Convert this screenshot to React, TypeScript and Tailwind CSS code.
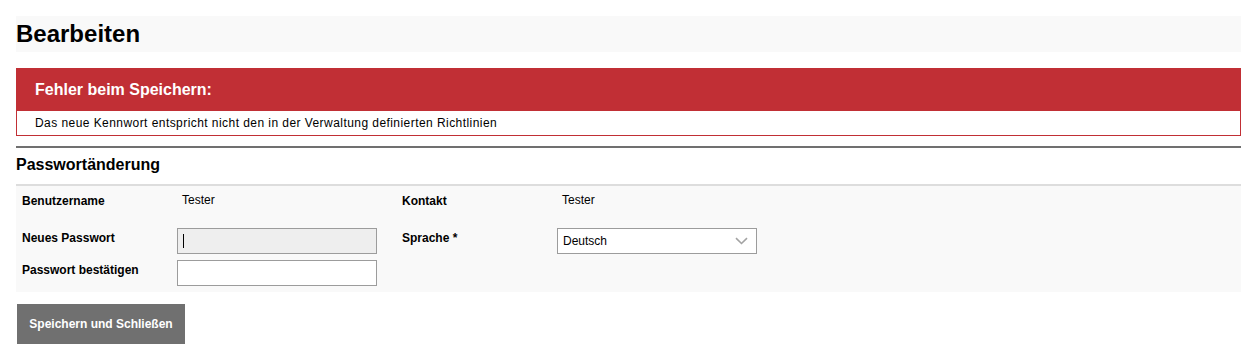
import React from "react";

export default function App() {
  const font = { fontFamily: '"Liberation Sans", Arial, sans-serif' };
  return (
    <div className="min-h-[355px] w-full bg-white px-[16px] pt-[16px] text-black" style={font}>
      <div className="mr-[-2px] flex h-[36px] items-center bg-[#f9f9f9]">
        <h1 className="text-[24px] font-bold leading-[28px]">Bearbeiten</h1>
      </div>

      <div className="mt-[16px] mr-[-2px] border border-[#c12f35]">
        <div className="flex h-[42px] items-center bg-[#c12f35] pl-[18px]">
          <span className="text-[16px] font-bold leading-[20px] text-white">Fehler beim Speichern:</span>
        </div>
        <div className="flex h-[24px] items-center pl-[18px] text-[12px] leading-[14px] tracking-[0.44px] text-black">
          Das neue Kennwort entspricht nicht den in der Verwaltung definierten Richtlinien
        </div>
      </div>

      <div className="mt-[10px] mr-[-2px] h-[2px] bg-[#707070]" />
      <div className="mr-[-2px] flex h-[36px] items-start pt-[7px]">
        <h2 className="text-[16px] font-bold leading-[20px]">Passwortänderung</h2>
      </div>
      <div className="mr-[-2px] h-[2px] bg-[#dddddd]" />

      <div className="mr-[-2px] bg-[#f9f9f9] px-[6px] pt-[8px] pb-[6px] text-[12px] leading-[14px]">
        <div className="grid grid-cols-[155px_225px_155px_200px] grid-rows-[28px_26px_26px] gap-y-[6px] [&>*]:min-w-0">
          <div className="font-bold">Benutzername</div>
          <div className="mt-[-1px] pl-[5px]">Tester</div>
          <div className="font-bold">Kontakt</div>
          <div className="mt-[-1px] pl-[5px]">Tester</div>

          <div className="pt-[3px] font-bold">Neues Passwort</div>
          <div className="flex h-[26px] w-[200px] items-center border border-[#9c9c9c] bg-[#eeeeee] pl-[5px]">
            <span className="h-[14px] w-[1px] bg-black" />
          </div>
          <div className="pt-[3px] font-bold">Sprache *</div>
          <div className="flex h-[26px] w-[200px] items-center justify-between border border-[#9c9c9c] bg-white pl-[5px] pr-[8px]">
            <span>Deutsch</span>
            <svg width="13" height="8" viewBox="0 0 13 8" fill="none">
              <path d="M1 1.2 L6.5 6.5 L12 1.2" stroke="#a3a3a3" strokeWidth="1.6" />
            </svg>
          </div>

          <div className="pt-[3px] font-bold">Passwort bestätigen</div>
          <div className="h-[26px] w-[200px] border border-[#9c9c9c] bg-white" />
          <div />
          <div />
        </div>
      </div>

      <button className="mt-[12px] ml-[1px] flex h-[40px] w-[168px] items-center justify-center bg-[#707070] text-[12px] font-bold text-white">
        Speichern und Schließen
      </button>
    </div>
  );
}
